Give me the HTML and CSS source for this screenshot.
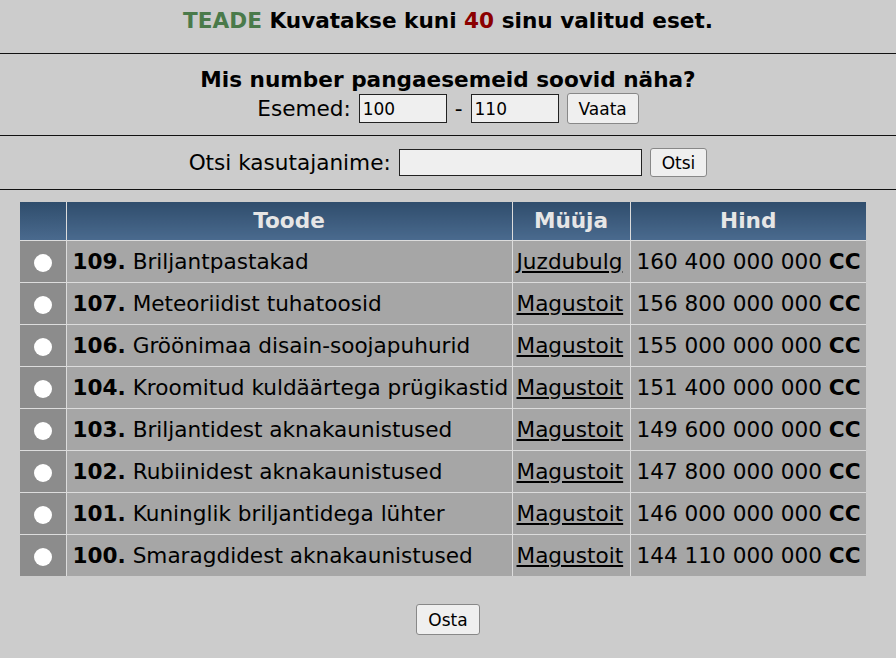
FILE: index.html
```html
<!DOCTYPE html>
<html lang="et">
<head>
<meta charset="UTF-8" />
<title>Pank</title>
<link rel="stylesheet" href="styles.css">
</head>
<body>

<div class="notice">
  <span class="tag">TEADE</span> Kuvatakse kuni <span class="num">40</span> sinu valitud eset.
</div>
<hr>

<form class="range">
  <div class="question">Mis number pangaesemeid soovid näha?</div>
  <div class="row">
    Esemed:
    <input type="text" class="small" value="100">
    -
    <input type="text" class="small" value="110">
    <button type="button">Vaata</button>
  </div>
</form>
<hr>

<form class="search">
  <div class="row">
    Otsi kasutajanime:
    <input type="text" class="wide" value="">
    <button type="button" class="short">Otsi</button>
  </div>
</form>
<hr>

<table class="items">
  <thead>
    <tr>
      <th class="pick"></th>
      <th>Toode</th>
      <th class="seller">Müüja</th>
      <th class="price">Hind</th>
    </tr>
  </thead>
  <tbody>
    <tr>
      <td class="pick"><span class="radio"></span></td>
      <td><b>109.</b> Briljantpastakad</td>
      <td class="seller"><a href="#">Juzdubulg</a></td>
      <td class="price">160 400 000 000 <b>CC</b></td>
    </tr>
    <tr>
      <td class="pick"><span class="radio"></span></td>
      <td><b>107.</b> Meteoriidist tuhatoosid</td>
      <td class="seller"><a href="#">Magustoit</a></td>
      <td class="price">156 800 000 000 <b>CC</b></td>
    </tr>
    <tr>
      <td class="pick"><span class="radio"></span></td>
      <td><b>106.</b> Gröönimaa disain-soojapuhurid</td>
      <td class="seller"><a href="#">Magustoit</a></td>
      <td class="price">155 000 000 000 <b>CC</b></td>
    </tr>
    <tr>
      <td class="pick"><span class="radio"></span></td>
      <td><b>104.</b> Kroomitud kuldäärtega prügikastid</td>
      <td class="seller"><a href="#">Magustoit</a></td>
      <td class="price">151 400 000 000 <b>CC</b></td>
    </tr>
    <tr>
      <td class="pick"><span class="radio"></span></td>
      <td><b>103.</b> Briljantidest aknakaunistused</td>
      <td class="seller"><a href="#">Magustoit</a></td>
      <td class="price">149 600 000 000 <b>CC</b></td>
    </tr>
    <tr>
      <td class="pick"><span class="radio"></span></td>
      <td><b>102.</b> Rubiinidest aknakaunistused</td>
      <td class="seller"><a href="#">Magustoit</a></td>
      <td class="price">147 800 000 000 <b>CC</b></td>
    </tr>
    <tr>
      <td class="pick"><span class="radio"></span></td>
      <td><b>101.</b> Kuninglik briljantidega lühter</td>
      <td class="seller"><a href="#">Magustoit</a></td>
      <td class="price">146 000 000 000 <b>CC</b></td>
    </tr>
    <tr>
      <td class="pick"><span class="radio"></span></td>
      <td><b>100.</b> Smaragdidest aknakaunistused</td>
      <td class="seller"><a href="#">Magustoit</a></td>
      <td class="price">144 110 000 000 <b>CC</b></td>
    </tr>
  </tbody>
</table>

<div class="buy">
  <button type="button">Osta</button>
</div>

</body>
</html>
```

FILE: styles.css
```css
* { box-sizing: border-box; }
html, body {
  margin: 0; padding: 0;
  background: #cccccc;
  color: #000;
  font-family: "DejaVu Sans", Verdana, sans-serif;
  font-size: 21.6px;
  overflow: hidden;
}

hr {
  margin: 0;
  border: 0;
  border-top: 1px solid #111;
}

.notice {
  text-align: center;
  font-weight: bold;
  padding: 7px 0 19px;
  line-height: 27px;
}
.notice .tag { color: #4a7a4a; }
.notice .num { color: #8b0000; }

.range {
  text-align: center;
  padding: 12px 0 11px;
}
.question {
  font-weight: bold;
  line-height: 27px;
}

.row {
  display: flex;
  justify-content: center;
  align-items: center;
  gap: 8px;
}

.search {
  text-align: center;
  padding: 12px 0 12px;
}

input {
  font-family: "DejaVu Sans", Verdana, sans-serif;
  font-size: 17px;
  background: #efefef;
  border: 1px solid #222;
  padding: 2px 3px;
  height: 29px;
}
input.small { width: 88px; }
input.wide { width: 243px; height: 27px; }

button {
  font-family: "DejaVu Sans", Verdana, sans-serif;
  font-size: 17px;
  background: #efefef;
  border: 1px solid #888;
  border-radius: 3px;
  padding: 0 11px;
  height: 31px;
  cursor: pointer;
}
button.short { height: 29px; }

.items {
  margin: 12px 0 0 20px;
  width: 846px;
  border-collapse: collapse;
  table-layout: fixed;
}
.items th {
  height: 38px;
  background: linear-gradient(#2f4d6c, #4a6a8e);
  color: #e6e6e6;
  font-weight: bold;
  text-align: center;
  padding: 0 6px;
}
.items td {
  height: 42px;
  background: #a6a6a6;
  padding: 0 6px;
  white-space: nowrap;
  overflow: hidden;
}
.items th + th,
.items td + td { border-left: 1px solid #dcdcdc; }
.items tbody td { border-top: 1px solid #dcdcdc; }
.items .pick { width: 46px; text-align: center; }
.items .seller { width: 118px; padding: 0 4px; }
.items .price { width: 236px; }
.items td.pick { background: #8c8c8c; }
.items a { color: #000; }

.radio {
  display: inline-block;
  width: 18px;
  height: 18px;
  border-radius: 50%;
  background: #fff;
  vertical-align: middle;
}

.buy {
  text-align: center;
  padding-top: 28px;
}
```
